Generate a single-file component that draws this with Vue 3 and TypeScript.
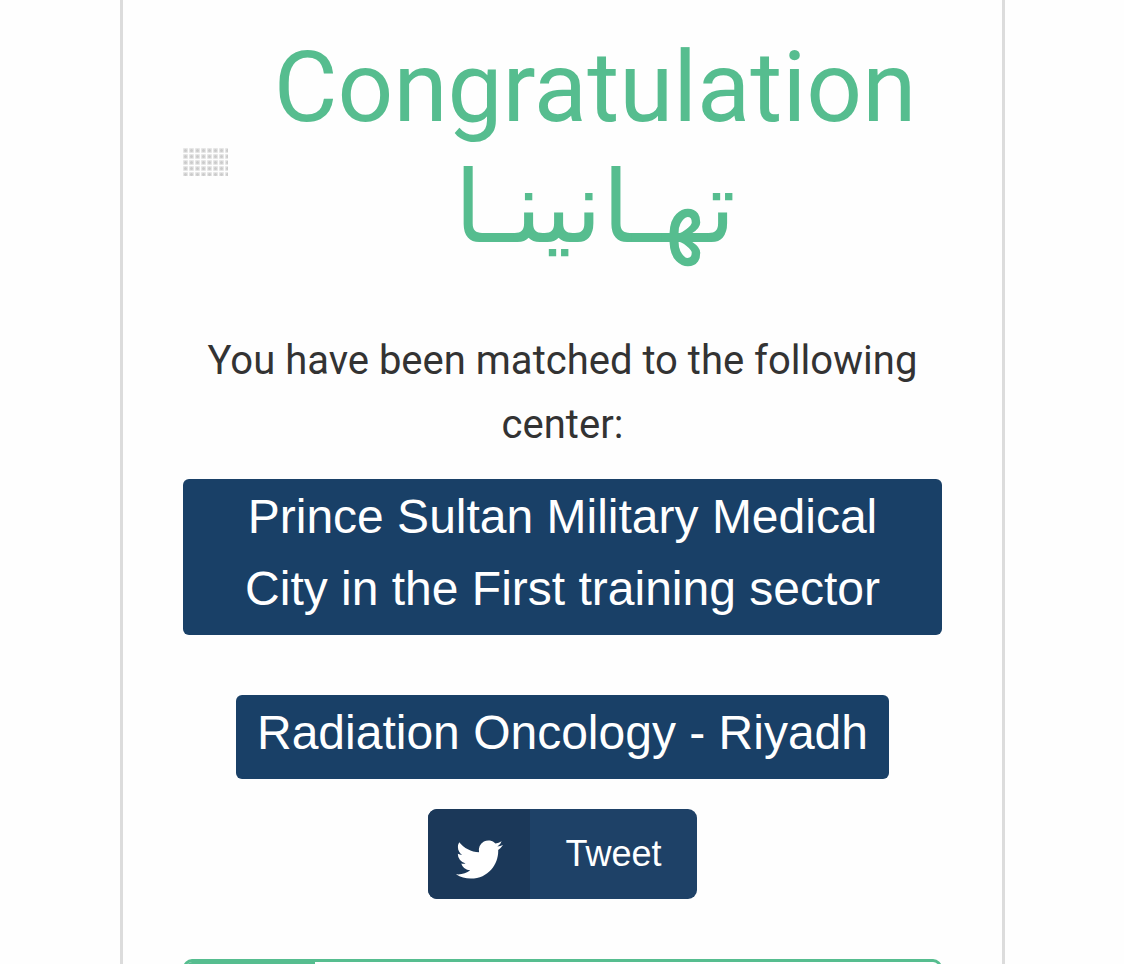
<script setup lang="ts">
const center = 'Prince Sultan Military Medical City in the First training sector'
const program = 'Radiation Oncology - Riyadh'
const dotRows = 5
const dotColumns = 8
</script>

<template>
  <div class="page">
    <main class="card">
      <header class="banner">
        <svg class="dots" viewBox="0 0 45 28" aria-hidden="true">
          <g v-for="row in dotRows" :key="row">
            <g v-for="col in dotColumns" :key="col">
              <rect
                class="halo"
                :x="col * 6 - 6"
                :y="row * 6 - 6"
                width="5"
                height="5"
                rx="1"
              />
              <circle :cx="col * 6 - 3.5" :cy="row * 6 - 3.5" r="1.5" />
            </g>
          </g>
        </svg>
        <h1 class="title">
          <span class="line">Congratulation</span>
          <span class="line arabic" lang="ar" dir="rtl">تهـانينـا</span>
        </h1>
      </header>
      <p class="message">You have been matched to the following center:</p>
      <p class="label wide">{{ center }}</p>
      <p class="label">{{ program }}</p>
      <button class="tweet" type="button">
        <span class="tweet-icon">
          <svg viewBox="0 0 24 24" aria-hidden="true">
            <path
              d="M23.953 4.57a10 10 0 01-2.825.775 4.958 4.958 0 002.163-2.723c-.951.555-2.005.959-3.127 1.184a4.92 4.92 0 00-8.384 4.482C7.69 8.095 4.067 6.13 1.64 3.162a4.822 4.822 0 00-.666 2.475c0 1.71.87 3.213 2.188 4.096a4.904 4.904 0 01-2.228-.616v.06a4.923 4.923 0 003.946 4.827 4.996 4.996 0 01-2.212.085 4.936 4.936 0 004.604 3.417 9.867 9.867 0 01-6.102 2.105c-.39 0-.779-.023-1.17-.067a13.995 13.995 0 007.557 2.209c9.053 0 13.998-7.496 13.998-13.985 0-.21 0-.42-.015-.63A9.935 9.935 0 0024 4.59z"
            />
          </svg>
        </span>
        <span class="tweet-text">Tweet</span>
      </button>
      <div class="panel"><div class="panel-head"></div></div>
    </main>
  </div>
</template>

<style>
body {
  background: #fefefe;
}
</style>

<style scoped>
.page {
  box-sizing: border-box;
  height: 100vh;
  overflow: hidden;
  padding: 0 119px 0 120px;
  font-family: "Liberation Sans", Arial, sans-serif;
}
.card {
  display: flex;
  flex-direction: column;
  align-items: center;
  padding: 28px 60px;
  border: solid #dcdcdc;
  border-width: 0 3px;
}
.banner {
  display: flex;
  align-items: center;
  gap: 20px;
  width: 100%;
}
.dots {
  flex: none;
  width: 45px;
  height: 28px;
  margin-top: 28px;
  fill: #cbcbcb;
}
.halo {
  fill: #e6e6e6;
}
.title {
  flex: 1;
  margin: 0;
  color: #56bd8f;
  font-family: Roboto, "DejaVu Sans", sans-serif;
  font-size: 98px;
  font-weight: 400;
  line-height: 120px;
  text-align: center;
}
.line {
  display: block;
}
.arabic {
  font-family: "DejaVu Sans", sans-serif;
  font-size: 100px;
}
.message {
  margin: 61px 0 22px;
  color: #333;
  font-family: Roboto, sans-serif;
  font-size: 40px;
  line-height: 64px;
  text-align: center;
}
.label {
  box-sizing: border-box;
  margin: 0 0 30px;
  padding: 2px 21px 10px;
  border-radius: 6px;
  background: #194067;
  color: #fff;
  font-size: 48px;
  line-height: 72px;
  text-align: center;
}
.wide {
  width: 100%;
  margin-bottom: 60px;
}
.tweet {
  display: flex;
  height: 90px;
  padding: 0;
  overflow: hidden;
  border: 0;
  border-radius: 9px;
  background: #1e4167;
  color: #fff;
  font-family: inherit;
  font-size: 36px;
  cursor: pointer;
}
.tweet-icon {
  display: flex;
  align-items: center;
  justify-content: center;
  width: 102px;
  height: 100%;
  padding-top: 10px;
  box-sizing: border-box;
  background: #1b3859;
}
.tweet-icon svg {
  width: 47px;
  height: 47px;
  fill: #fff;
}
.tweet-text {
  padding: 0 35px;
  line-height: 90px;
}
.panel {
  box-sizing: border-box;
  width: 100%;
  height: 90px;
  margin-top: 60px;
  overflow: hidden;
  border: 3px solid #56bd8f;
  border-radius: 9px;
}
.panel-head {
  width: 129px;
  height: 100%;
  background: #56bd8f;
}
</style>
